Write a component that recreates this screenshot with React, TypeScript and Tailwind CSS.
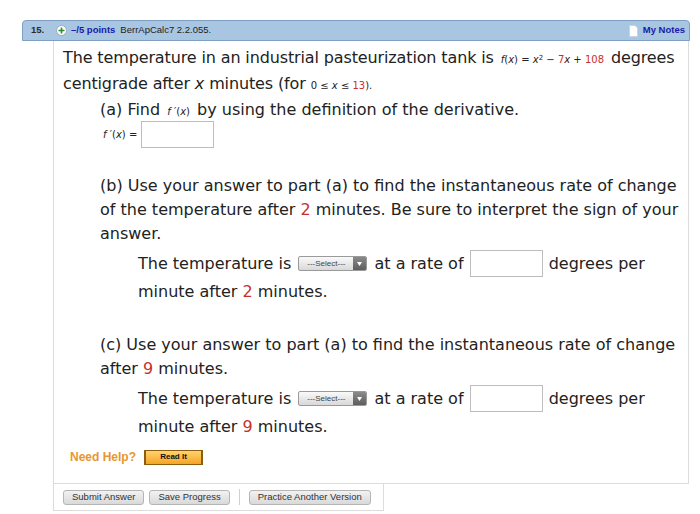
import React from "react";

const red = "text-[#c8302c]";

function Select() {
  return (
    <span className="inline-flex items-stretch align-middle h-[15px] w-[69px] mx-[2px] rounded-[2px] border border-[#9a9a9a] overflow-hidden bg-gradient-to-b from-[#fafafa] to-[#d8d8d8] relative top-[-1px]">
      <span className="flex-1 flex items-center justify-center text-[8px] text-[#444] font-['Liberation_Sans',Arial,sans-serif] leading-none">---Select---</span>
      <span className="w-[13px] flex items-center justify-center bg-gradient-to-b from-[#8a8a8a] to-[#5e5e5e]">
        <svg width="5" height="4" viewBox="0 0 5 4"><path d="M0 0h5L2.5 4z" fill="#fff" /></svg>
      </span>
    </span>
  );
}

function Input() {
  return (
    <span className="inline-block align-middle h-[27px] w-[73px] border border-[#bdbdbd] bg-white mx-[1px] relative top-[-1px]" />
  );
}

function Btn({ children }: { children: React.ReactNode }) {
  return (
    <span className="shrink-0 whitespace-nowrap inline-flex items-center h-[15px] px-[8px] rounded-[3px] border border-[#b5b5b5] bg-gradient-to-b from-[#f2f2f2] to-[#d9d9d9] text-[9.5px] text-[#333] font-['Liberation_Sans',Arial,sans-serif] leading-none">
      {children}
    </span>
  );
}

export default function App() {
  return (
    <div className="w-[700px] h-[514px] bg-white pt-[20px] font-['DejaVu_Sans',Verdana,sans-serif] text-[#222] overflow-hidden">
      {/* header */}
      <div className="ml-[22px] w-[668px] h-[21px] rounded-t-[4px] border border-[#7f9fc2] bg-[#a8c5e2] flex items-center pl-[8px] pr-[4px] font-['Liberation_Sans',Arial,sans-serif] text-[9.5px]">
        <span className="font-bold text-[#2a2a2a] w-[24px]">15.</span>
        <span className="ml-[1px] w-[11px] h-[11px] rounded-full bg-white border border-[#9ab] flex items-center justify-center">
          <svg width="7" height="7" viewBox="0 0 7 7"><path d="M3.5 0.5v6M0.5 3.5h6" stroke="#2e8b2e" strokeWidth="1.6" /></svg>
        </span>
        <span className="ml-[4px] font-bold text-[#1a1aa8]">–/5 points</span>
        <span className="ml-[5px] text-[#222]">BerrApCalc7 2.2.055.</span>
        <span className="ml-auto flex items-center">
          <svg width="9" height="12" viewBox="0 0 9 12" className="mr-[5px]">
            <path d="M0.5 0.5h5.5l2.5 2.5v8.5h-8z" fill="#fff" stroke="#c9d4df" />
          </svg>
          <span className="font-bold text-[#1a1aa8]">My Notes</span>
        </span>
      </div>

      {/* content */}
      <div className="ml-[53px] w-[636px] border-l border-r border-b border-[#dcdcdc] pl-[9px] pr-[8px] pt-[5px] pb-[14px] text-[16px] leading-[24px]">
        <p className="whitespace-nowrap tracking-[-0.13px]">
          The temperature in an industrial pasteurization tank is{" "}
          <span className="text-[10px] mx-[2px] tracking-normal">
            <i>f</i>(<i>x</i>) = <i>x</i><sup className="text-[7px]">2</sup> − <span className={red}>7</span><i>x</i> + <span className={red}>108</span>
          </span>{" "}
          degrees
          <br />
          centigrade after <i>x</i> minutes (for{" "}
          <span className="text-[10px] tracking-normal">
            0 ≤ <i>x</i> ≤ <span className={red}>13</span>).
          </span>
        </p>

        <div className="pl-[37px]">
          <p>
            (a) Find <span className="text-[10px] mx-[2px]"><i>f</i> ′(<i>x</i>)</span> by using the definition of the derivative.
          </p>
          <div className="flex items-center mt-[-3px] h-[27px]">
            <span className="text-[10px] ml-[3px]"><i>f</i> ′(<i>x</i>) =</span>
            <span className="ml-[4px] w-[73px] h-[27px] border border-[#bdbdbd]" />
          </div>

          <p className="mt-[26px]">
            (b) Use your answer to part (a) to find the instantaneous rate of change of the temperature after <span className={red}>2</span> minutes. Be sure to interpret the sign of your answer.
          </p>
          <p className="pl-[38px] mt-[4px] leading-[27px]">
            The temperature is <Select /> at a rate of <Input /> degrees per minute after <span className={red}>2</span> minutes.
          </p>

          <p className="mt-[28px]">
            (c) Use your answer to part (a) to find the instantaneous rate of change after <span className={red}>9</span> minutes.
          </p>
          <p className="pl-[38px] mt-[4px] leading-[27px]">
            The temperature is <Select /> at a rate of <Input /> degrees per minute after <span className={red}>9</span> minutes.
          </p>
        </div>

        <div className="flex items-center mt-[5px] ml-[7px] font-['Liberation_Sans',Arial,sans-serif]">
          <span className="text-[12px] font-bold text-[#e8962e]">Need Help?</span>
          <span className="ml-[8px] h-[15px] w-[59px] flex items-center justify-center border border-[#8a5d10] border-l-[2px] border-r-[2px] bg-gradient-to-b from-[#ffd36a] to-[#f5a520] text-[8px] font-bold text-[#111] leading-none">
            Read It
          </span>
        </div>
      </div>

      {/* buttons */}
      <div className="ml-[53px] w-[331px] h-[27px] border-l border-r border-b border-[#dcdcdc] flex items-center pl-[9px] gap-[5px]">
        <Btn>Submit Answer</Btn>
        <Btn>Save Progress</Btn>
        <span className="w-px h-[16px] bg-[#d0d0d0] mx-[4px]" />
        <Btn>Practice Another Version</Btn>
      </div>
    </div>
  );
}
